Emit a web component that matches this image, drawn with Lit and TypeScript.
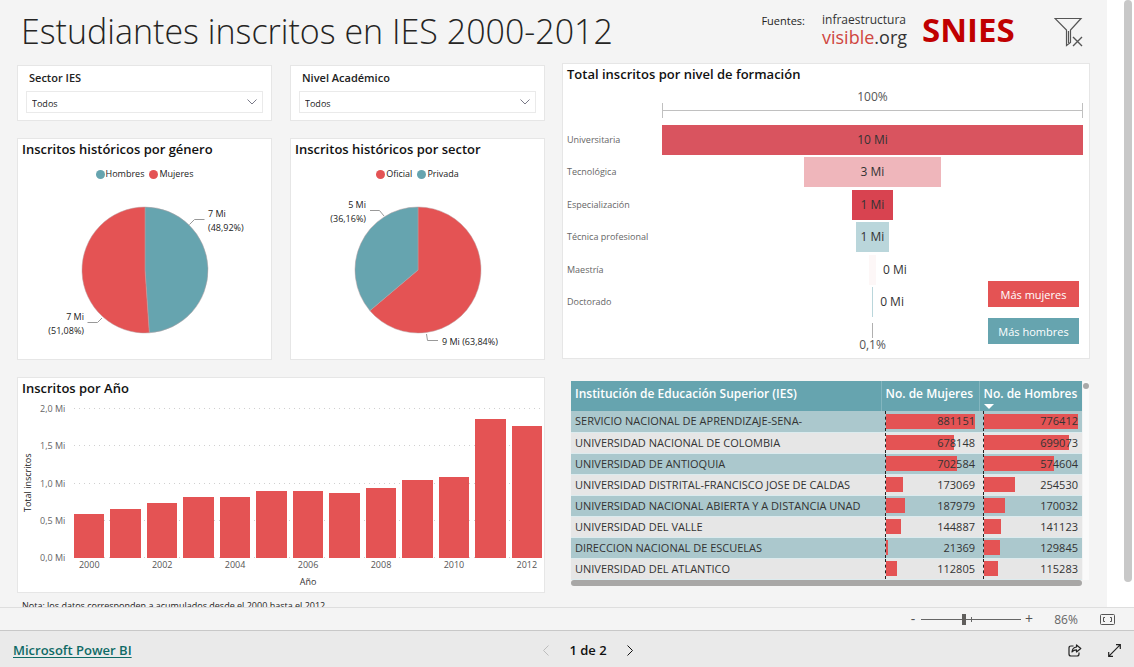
import { LitElement, html, css, svg } from "lit";
import { customElement, property } from "lit/decorators.js";

const RED = "#e45354";
const TEAL = "#66a4af";

interface Slice {
  name: string;
  share: number;
  color: string;
}

interface Callout {
  line: string;
  x: number;
  y: number;
  anchor: string;
  lines: string[];
}

const years = [
  { year: 2000, total: 0.59 },
  { year: 2001, total: 0.65 },
  { year: 2002, total: 0.73 },
  { year: 2003, total: 0.82 },
  { year: 2004, total: 0.82 },
  { year: 2005, total: 0.89 },
  { year: 2006, total: 0.89 },
  { year: 2007, total: 0.87 },
  { year: 2008, total: 0.94 },
  { year: 2009, total: 1.04 },
  { year: 2010, total: 1.08 },
  { year: 2011, total: 1.85 },
  { year: 2012, total: 1.76 },
];

const levels = [
  { name: "Universitaria", width: 100, label: "10 Mi", color: "#d9545f" },
  { name: "Tecnológica", width: 32.6, label: "3 Mi", color: "#efb6bb" },
  { name: "Especialización", width: 9.7, label: "1 Mi", color: "#d84350" },
  { name: "Técnica profesional", width: 7.8, label: "1 Mi", color: "#bad6db" },
  { name: "Maestría", width: 1.7, label: "0 Mi", color: "#fdf7f7", outside: true },
  { name: "Doctorado", width: 0.3, label: "0 Mi", color: "#bad6db", outside: true },
];

const institutions: [string, number, number][] = [
  ["SERVICIO NACIONAL DE APRENDIZAJE-SENA-", 881151, 776412],
  ["UNIVERSIDAD NACIONAL DE COLOMBIA", 678148, 699073],
  ["UNIVERSIDAD DE ANTIOQUIA", 702584, 574604],
  ["UNIVERSIDAD DISTRITAL-FRANCISCO JOSE DE CALDAS", 173069, 254530],
  ["UNIVERSIDAD NACIONAL ABIERTA Y A DISTANCIA UNAD", 187979, 170032],
  ["UNIVERSIDAD DEL VALLE", 144887, 141123],
  ["DIRECCION NACIONAL DE ESCUELAS", 21369, 129845],
  ["UNIVERSIDAD DEL ATLANTICO", 112805, 115283],
];

@customElement("pie-card")
export class PieCard extends LitElement {
  @property() heading = "";
  @property({ attribute: false }) slices: Slice[] = [];
  @property({ attribute: false }) callouts: Callout[] = [];

  static styles = css`
    :host {
      display: flex;
      flex-direction: column;
      box-sizing: border-box;
      background: #fff;
      border: 1px solid #e6e6e6;
    }
    .heading {
      margin: 0;
      padding: 0 4px;
      font-size: 13px;
      line-height: 20px;
      font-weight: 600;
      color: #111;
      white-space: nowrap;
    }
    .legend {
      display: flex;
      justify-content: center;
      gap: 5px;
      margin: 8px 0 0;
      padding: 0;
      list-style: none;
      font-size: 9px;
      line-height: 14px;
      color: #222;
    }
    .key {
      display: flex;
      align-items: center;
      gap: 1px;
    }
    .dot {
      width: 9px;
      height: 9px;
      border-radius: 50%;
    }
    .chart {
      display: block;
      align-self: center;
      width: 253px;
      height: 177px;
      overflow: visible;
    }
    .callout {
      font-size: 9px;
      fill: #222;
    }
  `;

  private point(share: number) {
    const a = share * 2 * Math.PI;
    return `${127 + 63 * Math.sin(a)} ${89 - 63 * Math.cos(a)}`;
  }

  render() {
    let start = 0;
    const wedges = this.slices.map((s) => {
      const end = start + s.share;
      const d = `M127 89L${this.point(start)}A63 63 0 ${s.share > 0.5 ? 1 : 0} 1 ${this.point(end)}Z`;
      start = end;
      return svg`<path d=${d} fill=${s.color} stroke="#b9a0a2" stroke-width="0.5" />`;
    });
    return html`
      <h2 class="heading">${this.heading}</h2>
      <ul class="legend">
        ${this.slices.map(
          (s) => html`<li class="key"><span class="dot" style="background:${s.color}"></span>${s.name}</li>`
        )}
      </ul>
      <svg class="chart" viewBox="0 0 253 177" role="img" aria-label=${this.heading}>
        ${wedges}
        ${this.callouts.map(
          (c) => svg`
            <path d=${c.line} fill="none" stroke="#999" />
            ${c.lines.map(
              (t, i) => svg`<text class="callout" x=${c.x} y=${c.y + i * 14} text-anchor=${c.anchor}>${t}</text>`
            )}`
        )}
      </svg>
    `;
  }
}

@customElement("app-root")
export class AppRoot extends LitElement {
  static styles = css`
    :host {
      display: flex;
      flex-direction: column;
      height: 100vh;
      overflow: hidden;
      font-family: "Open Sans", "Noto Sans", sans-serif;
      color: #252423;
      background: #f4f4f4;
    }
    * {
      box-sizing: border-box;
    }
    .viewport {
      display: flex;
      flex: 1;
      min-height: 0;
      overflow: hidden;
      border-bottom: 1px solid #dedede;
    }
    .canvas {
      flex: 1;
      min-width: 0;
      padding: 0 17px;
    }
    .gutter {
      width: 27px;
      padding: 0 2px 25px 17px;
      background: #fff;
    }
    .page-thumb {
      height: 100%;
      border-radius: 4px;
      background: #c8c8c8;
    }
    .header {
      display: flex;
      justify-content: space-between;
      height: 63px;
    }
    .title {
      margin: 0;
      padding-left: 4px;
      font-size: 34px;
      line-height: 62px;
      font-weight: 300;
      white-space: nowrap;
    }
    .sources {
      display: flex;
      align-items: flex-start;
      padding: 12px 6px 0 0;
    }
    .sources-label {
      font-size: 11px;
      line-height: 18px;
      margin-right: 17px;
    }
    .iv {
      display: flex;
      flex-direction: column;
      font-size: 12px;
      line-height: 16px;
      width: 100px;
      color: #333;
    }
    .iv-name {
      font-size: 18px;
      line-height: 18px;
    }
    .iv-red {
      color: #cf4540;
    }
    .snies {
      font-weight: 700;
      font-size: 33px;
      line-height: 36px;
      color: #c00000;
      width: 132px;
    }
    .icon-button {
      display: flex;
      padding: 0;
      border: 0;
      background: none;
      color: inherit;
    }
    .icon-button svg {
      display: block;
    }
    .columns {
      display: grid;
      grid-template-columns: 1fr 1fr;
      gap: 17px;
    }
    .left {
      display: grid;
      grid-template-columns: 1fr 1fr;
      gap: 17px 18px;
      align-content: start;
      padding-top: 2px;
    }
    .right {
      display: flex;
      flex-direction: column;
      gap: 22px;
      min-width: 0;
    }
    .card {
      background: #fff;
      border: 1px solid #e6e6e6;
    }
    .heading {
      margin: 0;
      padding: 0 4px;
      font-size: 13px;
      line-height: 20px;
      font-weight: 600;
      color: #111;
      white-space: nowrap;
    }
    .slicer {
      height: 56px;
      padding: 2px 8px 0;
    }
    .slicer-label {
      display: block;
      padding-left: 3px;
      font-size: 11px;
      line-height: 20px;
      font-weight: 600;
      color: #222;
    }
    .picker {
      display: grid;
      align-items: center;
      margin-top: 3px;
      border: 1px solid #eaeaea;
    }
    .select {
      grid-area: 1 / 1;
      height: 20px;
      padding: 2px 5px 0;
      border: 0;
      appearance: none;
      background: none;
      font: inherit;
      font-size: 9px;
      color: #222;
    }
    .chevron {
      grid-area: 1 / 1;
      justify-self: end;
      margin-right: 5px;
      pointer-events: none;
    }
    .pie {
      height: 222px;
    }
    .annual {
      grid-column: 1 / -1;
      height: 216px;
    }
    .annual-body {
      display: grid;
      grid-template-columns: 13px 28px 1fr;
      column-gap: 6px;
      padding: 10px 2px 0 3px;
    }
    .y-title {
      writing-mode: vertical-rl;
      transform: rotate(180deg);
      text-align: center;
      font-size: 9px;
      line-height: 13px;
      color: #222;
    }
    .y-axis {
      display: flex;
      flex-direction: column;
      justify-content: space-between;
      height: 162px;
      margin: -6px 0;
      font-size: 9px;
      line-height: 13px;
      color: #666;
      white-space: nowrap;
    }
    .plot {
      display: grid;
      height: 150px;
    }
    .grid-lines {
      grid-area: 1 / 1;
      display: flex;
      flex-direction: column;
      justify-content: space-between;
    }
    .grid-line {
      height: 1px;
      background: repeating-linear-gradient(90deg, #d0d0d0 0 1px, transparent 1px 5px);
    }
    .bars {
      grid-area: 1 / 1;
      display: flex;
      align-items: flex-end;
      gap: 6px;
    }
    .bar {
      flex: 1;
      background: #e45354;
    }
    .x-axis {
      grid-column: 3;
      display: flex;
      gap: 6px;
      font-size: 9px;
      line-height: 14px;
      color: #555;
    }
    .tick {
      flex: 1;
      min-width: 0;
      text-align: center;
    }
    .x-title {
      grid-column: 3;
      text-align: center;
      font-size: 9px;
      line-height: 16px;
      margin-top: 2px;
      color: #333;
    }
    .note {
      grid-column: 1 / -1;
      margin: -11px 0 0;
      padding-left: 5px;
      font-size: 9px;
      line-height: 14px;
      color: #222;
    }
    .funnel {
      position: relative;
      height: 296px;
    }
    .funnel-body {
      display: grid;
      grid-template-columns: 95px 1fr;
      padding: 2px 6px 0 4px;
      font-size: 12px;
      color: #333;
    }
    .scale {
      grid-column: 2;
      text-align: center;
      line-height: 22px;
      color: #555;
    }
    .bracket {
      height: 15px;
      margin: -5px 0 7px;
      border: solid #c0c0c0;
      border-width: 0 1px;
      background: linear-gradient(#c0c0c0, #c0c0c0) center / 100% 1px no-repeat;
    }
    .level-names,
    .level-bars {
      display: flex;
      flex-direction: column;
      justify-content: space-between;
      height: 192px;
    }
    .level-names {
      font-size: 9px;
      line-height: 30px;
      color: #666;
      white-space: nowrap;
    }
    .level {
      display: flex;
      height: 30px;
      line-height: 30px;
    }
    .side {
      flex: 1;
    }
    .side-label {
      margin-left: 7px;
    }
    .level-bar {
      display: flex;
      justify-content: center;
      white-space: nowrap;
    }
    .stem {
      width: 1px;
      height: 15px;
      margin: 6px auto 0;
      background: #b0b0b0;
    }
    .scale-end {
      line-height: 14px;
    }
    .choices {
      position: absolute;
      right: 10px;
      bottom: 14px;
      display: flex;
      flex-direction: column;
      gap: 11px;
    }
    .choice {
      width: 91px;
      height: 26px;
      padding: 0;
      border: 0;
      font: inherit;
      font-size: 11px;
      color: #fff;
      background: #e45354;
    }
    .choice.teal {
      background: #66a4af;
    }
    .table-wrap {
      display: grid;
      grid-template-columns: 1fr 6px;
      gap: 0 1px;
      padding: 0 1px 0 9px;
    }
    .table {
      width: 100%;
      border-collapse: collapse;
      table-layout: fixed;
      font-size: 11px;
      line-height: 20px;
      color: #333;
    }
    .head {
      height: 30px;
      padding: 3px 4px 0;
      vertical-align: top;
      text-align: left;
      font-size: 12px;
      font-weight: 600;
      color: #fff;
      background: #66a4af;
      white-space: nowrap;
    }
    .head + .head {
      border-left: 1px solid #83b6bf;
    }
    .col-women {
      width: 98px;
    }
    .col-men {
      width: 103px;
    }
    .sorted {
      display: block;
      width: 0;
      height: 0;
      border: 5px solid transparent;
      border-top-color: #fff;
      border-bottom: 0;
    }
    .row {
      height: 21px;
      background: #e6e6e6;
      border-bottom: 1px solid #dcebee;
    }
    .row:nth-child(odd) {
      background: #abc8cd;
    }
    .name {
      padding: 0 4px;
      text-align: left;
      font-weight: 400;
      white-space: nowrap;
    }
    .value {
      padding: 0 4px;
    }
    .value-cell {
      display: grid;
      align-items: center;
      border-left: 1px dashed #222;
    }
    .value-bar {
      grid-area: 1 / 1;
      height: 15px;
      background: #e45354;
    }
    .number {
      grid-area: 1 / 1;
      text-align: right;
    }
    .table-track {
      background: #fafafa;
    }
    .table-thumb {
      height: 6px;
      margin-top: 2px;
      border-radius: 3px;
      background: #a8a8a8;
    }
    .h-thumb {
      height: 6px;
      border-radius: 3px;
      background: #a8a7a6;
    }
    .zoom-bar {
      display: flex;
      align-items: center;
      justify-content: flex-end;
      height: 22px;
      padding-right: 19px;
      font-size: 12px;
      color: #666;
      background: #f4f4f4;
    }
    .step {
      width: 20px;
      padding: 0;
      border: 0;
      background: none;
      font: inherit;
      font-size: 14px;
      line-height: 20px;
      color: #555;
    }
    .range-box {
      display: grid;
      align-items: center;
      width: 100px;
      height: 20px;
      margin: 0 -2px;
    }
    .range-tick {
      grid-area: 1 / 1;
      width: 1px;
      height: 5px;
      margin-left: 50px;
      background: #666;
    }
    .range {
      grid-area: 1 / 1;
      width: 100%;
      height: 20px;
      margin: 0;
      appearance: none;
      background: linear-gradient(#666, #666) center / 100% 1px no-repeat;
    }
    .range::-webkit-slider-thumb {
      appearance: none;
      width: 4px;
      height: 11px;
      background: #605e5c;
    }
    .percent {
      width: 46px;
      text-align: center;
      margin: 0 11px 0 4px;
    }
    .footer {
      display: grid;
      grid-template-columns: 1fr auto 1fr;
      align-items: center;
      height: 37px;
      padding: 2px 13px 0;
      border-top: 1px solid #c8c8c8;
      background: #eaeaea;
    }
    .brand {
      font-size: 13px;
      font-weight: 600;
      color: #0f6a66;
      text-underline-offset: 2px;
      justify-self: start;
    }
    .pager {
      display: flex;
      align-items: center;
      gap: 20px;
      padding-left: 42px;
      font-size: 13px;
      font-weight: 600;
      color: #111;
    }
    .previous {
      color: #bdbdbd;
    }
    .actions {
      display: flex;
      justify-content: flex-end;
      gap: 26px;
      color: #222;
    }
  `;

  private slicer(id: string, label: string) {
    return html`
      <section class="card slicer">
        <label class="slicer-label" for=${id}>${label}</label>
        <div class="picker">
          <select class="select" id=${id}>
            <option>Todos</option>
          </select>
          <svg class="chevron" width="10" height="6" viewBox="0 0 10 6" fill="none" stroke="#7a7a88">
            <path d="M.5.5 5 5 9.5.5" />
          </svg>
        </div>
      </section>
    `;
  }

  private valueCell(value: number, max: number) {
    return html`<td class="value">
      <div class="value-cell">
        <span class="value-bar" style="width:${(value / max) * 100}%"></span>
        <span class="number">${value}</span>
      </div>
    </td>`;
  }

  render() {
    return html`
      <div class="viewport">
        <main class="canvas">
          <header class="header">
            <h1 class="title">Estudiantes inscritos en IES 2000-2012</h1>
            <div class="sources">
              <span class="sources-label">Fuentes:</span>
              <span class="iv">
                <span>infraestructura</span>
                <span class="iv-name"><span class="iv-red">visible</span>.org</span>
              </span>
              <span class="snies">SNIES</span>
              <button class="icon-button" aria-label="Borrar filtros">
                <svg width="30" height="38" viewBox="0 0 30 38" fill="none" stroke="#555" stroke-width="1.2">
                  <path d="M1 6.500h26L16.500 18v12.500l-4 3V18ZM14.500 19v12" />
                  <path d="m19 25 9 9m0-9-9 9" stroke-width="1.400" />
                </svg>
              </button>
            </div>
          </header>
          <div class="columns">
            <div class="left">
              ${this.slicer("sector", "Sector IES")} ${this.slicer("nivel", "Nivel Académico")}
              <pie-card
                class="pie"
                .heading=${"Inscritos históricos por género"}
                .slices=${[
                  { name: "Hombres", share: 0.4892, color: TEAL },
                  { name: "Mujeres", share: 0.5108, color: RED },
                ]}
                .callouts=${[
                  { line: "M171.500 43.500L176.500 38.500H186.500", x: 190, y: 36, anchor: "start", lines: ["7 Mi", "(48,92%)"] },
                  { line: "M84 137L79.500 141.500H69.500", x: 66, y: 139, anchor: "end", lines: ["7 Mi", "(51,08%)"] },
                ]}
              ></pie-card>
              <pie-card
                class="pie"
                .heading=${"Inscritos históricos por sector"}
                .slices=${[
                  { name: "Oficial", share: 0.6384, color: RED },
                  { name: "Privada", share: 0.3616, color: TEAL },
                ]}
                .callouts=${[
                  { line: "M93 35L88.500 29.500H79", x: 75, y: 27, anchor: "end", lines: ["5 Mi", "(36,16%)"] },
                  { line: "M135.500 153L136.500 159.500H147", x: 151, y: 164, anchor: "start", lines: ["9 Mi (63,84%)"] },
                ]}
              ></pie-card>
              <section class="card annual">
                <h2 class="heading">Inscritos por Año</h2>
                <div class="annual-body">
                  <span class="y-title">Total inscritos</span>
                  <div class="y-axis">
                    ${["2,0 Mi", "1,5 Mi", "1,0 Mi", "0,5 Mi", "0,0 Mi"].map((t) => html`<span>${t}</span>`)}
                  </div>
                  <div class="plot">
                    <div class="grid-lines">${[0, 1, 2, 3, 4].map(() => html`<div class="grid-line"></div>`)}</div>
                    <div class="bars">
                      ${years.map((y) => html`<div class="bar" style="height:${y.total * 50}%"></div>`)}
                    </div>
                  </div>
                  <div class="x-axis">
                    ${years.map((y) => html`<span class="tick">${y.year % 2 ? "" : y.year}</span>`)}
                  </div>
                  <div class="x-title">Año</div>
                </div>
              </section>
              <p class="note">Nota: los datos corresponden a acumulados desde el 2000 hasta el 2012</p>
            </div>
            <div class="right">
              <section class="card funnel">
                <h2 class="heading">Total inscritos por nivel de formación</h2>
                <div class="funnel-body">
                  <div class="scale">
                    100%
                    <div class="bracket"></div>
                  </div>
                  <div class="level-names">${levels.map((l) => html`<span>${l.name}</span>`)}</div>
                  <div class="level-bars">
                    ${levels.map(
                      (l) => html`<div class="level">
                        <span class="side"></span>
                        <span class="level-bar" style="width:${l.width}%;background:${l.color}"
                          >${l.outside ? "" : l.label}</span
                        >
                        <span class="side"
                          >${l.outside ? html`<span class="side-label">${l.label}</span>` : ""}</span
                        >
                      </div>`
                    )}
                  </div>
                  <div class="scale scale-end">
                    <div class="stem"></div>
                    0,1%
                  </div>
                </div>
                <div class="choices">
                  <button class="choice">Más mujeres</button>
                  <button class="choice teal">Más hombres</button>
                </div>
              </section>
              <div class="table-wrap">
                <table class="table">
                  <thead>
                    <tr>
                      <th class="head">Institución de Educación Superior (IES)</th>
                      <th class="head col-women">No. de Mujeres</th>
                      <th class="head col-men">No. de Hombres<span class="sorted"></span></th>
                    </tr>
                  </thead>
                  <tbody>
                    ${institutions.map(
                      ([name, women, men]) => html`<tr class="row">
                        <th class="name" scope="row">${name}</th>
                        ${this.valueCell(women, 881151)} ${this.valueCell(men, 776412)}
                      </tr>`
                    )}
                  </tbody>
                </table>
                <div class="table-track"><div class="table-thumb"></div></div>
                <div class="h-thumb"></div>
              </div>
            </div>
          </div>
        </main>
        <div class="gutter"><div class="page-thumb"></div></div>
      </div>
      <div class="zoom-bar">
        <button class="step" aria-label="Alejar">-</button>
        <span class="range-box">
          <span class="range-tick"></span>
          <input class="range" type="range" min="0" max="100" value="43" aria-label="Zoom" />
        </span>
        <button class="step" aria-label="Acercar">+</button>
        <span class="percent">86%</span>
        <button class="icon-button" aria-label="Ajustar a la página">
          <svg width="15" height="11" viewBox="0 0 15 11" fill="none" stroke="#555">
            <rect x=".5" y=".5" width="14" height="10" rx="1" />
            <path d="M5 3.500H3.500V7.500H5M10 3.500h1.500V7.500H10" />
          </svg>
        </button>
      </div>
      <footer class="footer">
        <a class="brand" href="#">Microsoft Power BI</a>
        <nav class="pager">
          <button class="icon-button previous" aria-label="Página anterior">
            <svg width="6" height="11" viewBox="0 0 6 11" fill="none" stroke="currentColor"><path d="M5.500.5.500 5.500l5 5" /></svg>
          </button>
          <span>1 de 2</span>
          <button class="icon-button" aria-label="Página siguiente">
            <svg width="6" height="11" viewBox="0 0 6 11" fill="none" stroke="currentColor"><path d="m.5.500 5 5-5 5" /></svg>
          </button>
        </nav>
        <div class="actions">
          <button class="icon-button" aria-label="Compartir">
            <svg width="14" height="13" viewBox="0 0 14 13" fill="none" stroke="currentColor" stroke-width="1.200" stroke-linejoin="round">
              <path d="M5.500 2H3Q1 2 1 4v6q0 2 2 2h6q2 0 2-2V8.500" />
              <path d="M8.500 1v2Q4.500 3.300 4 8q1.800-2.300 4.500-2.200V8L12.800 4.500Z" />
            </svg>
          </button>
          <button class="icon-button" aria-label="Pantalla completa">
            <svg width="13" height="13" viewBox="0 0 13 13" fill="none" stroke="currentColor" stroke-width="1.200">
              <path d="M.7 12.300l11.600-11.600M8 .7h4.300V5M.7 8v4.300H5" />
            </svg>
          </button>
        </div>
      </footer>
    `;
  }
}
